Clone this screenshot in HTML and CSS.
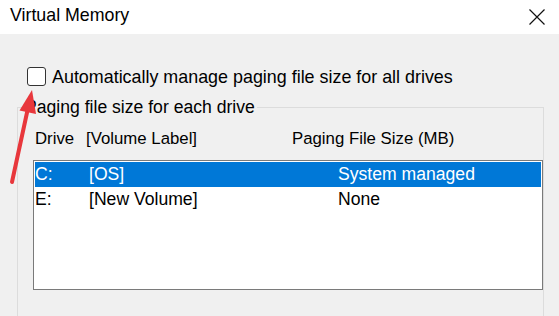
FILE: index.html
```html
<!DOCTYPE html>
<html lang="en">
<head>
    <meta charset="UTF-8">
    <meta name="viewport" content="width=device-width, initial-scale=1.0">
    <title>Virtual Memory</title>
    <link rel="stylesheet" href="styles.css">
</head>
<body>
    <div class="window">
        <div class="titlebar">
            <span class="title">Virtual Memory</span>
            <svg class="close" width="16" height="16" viewBox="0 0 16 16">
                <path d="M0.5 0.5 L15.5 15.5 M15.5 0.5 L0.5 15.5" stroke="#111" stroke-width="1.2" fill="none"/>
            </svg>
        </div>

        <div class="content">
            <label class="auto-row">
                <span class="checkbox"></span>
                <span>Automatically manage paging file size for all drives</span>
            </label>

            <fieldset class="group">
                <legend>Paging file size for each drive</legend>

                <div class="cols header">
                    <span>Drive</span>
                    <span>[Volume Label]</span>
                    <span>Paging File Size (MB)</span>
                </div>

                <div class="listbox">
                    <div class="cols row selected">
                        <span>C:</span>
                        <span>[OS]</span>
                        <span>System managed</span>
                    </div>
                    <div class="cols row">
                        <span>E:</span>
                        <span>[New Volume]</span>
                        <span>None</span>
                    </div>
                </div>
            </fieldset>
        </div>

        <!-- annotation arrow pointing at the checkbox -->
        <svg class="arrow" width="60" height="200" viewBox="0 0 60 200">
            <line x1="12" y1="182" x2="28" y2="108" stroke="#e8373c" stroke-width="4" stroke-linecap="round"/>
            <polygon points="32,90 36,114 19.5,110.5" fill="#e8373c"/>
        </svg>
    </div>
</body>
</html>
```

FILE: styles.css
```css
body {
    margin: 0;
    font-family: "Liberation Sans", Arial, sans-serif;
    font-size: 17px;
    color: #000;
    background-color: #f0f0f0;
}

.window {
    position: relative;
    width: 559px;
    height: 316px;
    overflow: hidden;
    background-color: #f0f0f0;
}

.titlebar {
    height: 34px;
    background-color: #fff;
    display: flex;
    align-items: center;
    justify-content: space-between;
    padding: 0 14px 4px 10px;
    box-sizing: border-box;
}

.title {
    font-size: 17.8px;
}

.close {
    margin-top: 3px;
}

.content {
    padding: 31px 15px 0 17px;
}

.auto-row {
    display: flex;
    align-items: center;
    gap: 6px;
    margin-left: 10px;
    font-size: 17.9px;
}

.auto-row span:last-child {
    margin-top: 2px;
}

.checkbox {
    width: 17px;
    height: 17px;
    border: 1.5px solid #333;
    border-radius: 3px;
    background-color: #fff;
}

.group {
    margin: 9px 0 0 0;
    padding: 0 0 40px 15px;
    border: 1px solid #dcdcdc;
    border-bottom: none;
    min-height: 220px;
}

.group legend {
    padding: 0 2px;
    margin-left: -10px;
    font-size: 17.6px;
}

.cols {
    display: grid;
    grid-template-columns: 51px 206px 1fr;
    align-items: center;
}

.header {
    height: 28px;
    padding-left: 2px;
    margin-top: 7px;
    font-size: 16.8px;
}

.listbox {
    height: 126px;
    margin-top: 7px;
    border: 1px solid #7a7a7a;
    background-color: #fff;
    padding: 1px;
}

.row {
    height: 25px;
    grid-template-columns: 54px 249px 1fr;
    padding-left: 0;
    font-size: 17.6px;
}

.selected {
    background-color: #0078d7;
    color: #fff;
}

.arrow {
    position: absolute;
    left: 0;
    top: 0;
}
```
